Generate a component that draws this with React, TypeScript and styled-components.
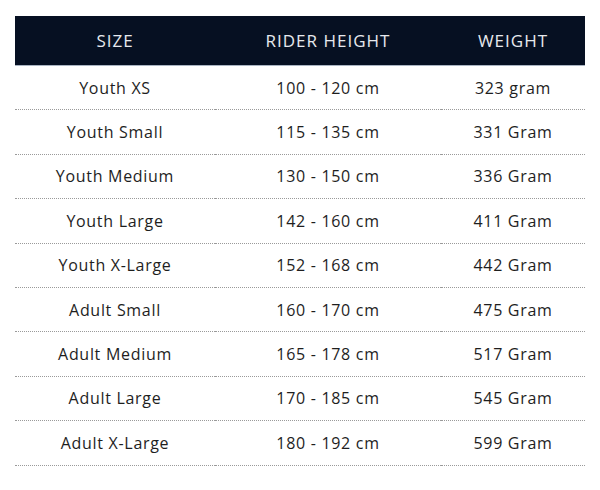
import React from "react";
import styled, { createGlobalStyle } from "styled-components";

const Global = createGlobalStyle`
  html, body { margin: 0; padding: 0; background: #fff; }
  body { font-family: "Open Sans", "Liberation Sans", sans-serif; }
`;

const Wrap = styled.div`
  padding: 16px 15px 0 15px;
  width: 570px;
`;

const Table = styled.table`
  width: 570px;
  border-collapse: collapse;
  table-layout: fixed;
`;

const HeadRow = styled.tr`
  background: #061022;
  border-bottom: 1px solid #a9b4c2;
`;

const Th = styled.th<{ $w: number }>`
  width: ${(p) => p.$w}px;
  height: 49px;
  padding: 0;
  color: #e6e9ee;
  font-weight: 400;
  font-size: 17px;
  letter-spacing: 1px;
  text-align: center;
`;

const Row = styled.tr`
  border-bottom: 1px dotted #9a9a9a;
`;

const Td = styled.td`
  height: 43.4px;
  padding: 0;
  text-align: center;
  color: #1e1e1e;
  font-size: 16px;
  letter-spacing: 0.7px;
`;

const rows = [
  ["Youth XS", "100 - 120 cm", "323 gram"],
  ["Youth Small", "115 - 135 cm", "331 Gram"],
  ["Youth Medium", "130 - 150 cm", "336 Gram"],
  ["Youth Large", "142 - 160 cm", "411 Gram"],
  ["Youth X-Large", "152 - 168 cm", "442 Gram"],
  ["Adult Small", "160 - 170 cm", "475 Gram"],
  ["Adult Medium", "165 - 178 cm", "517 Gram"],
  ["Adult Large", "170 - 185 cm", "545 Gram"],
  ["Adult X-Large", "180 - 192 cm", "599 Gram"],
];

export default function App() {
  return (
    <>
      <Global />
      <Wrap>
        <Table>
          <thead>
            <HeadRow>
              <Th $w={200}>SIZE</Th>
              <Th $w={226}>RIDER HEIGHT</Th>
              <Th $w={144}>WEIGHT</Th>
            </HeadRow>
          </thead>
          <tbody>
            {rows.map((r) => (
              <Row key={r[0]}>
                <Td>{r[0]}</Td>
                <Td>{r[1]}</Td>
                <Td>{r[2]}</Td>
              </Row>
            ))}
          </tbody>
        </Table>
      </Wrap>
    </>
  );
}
